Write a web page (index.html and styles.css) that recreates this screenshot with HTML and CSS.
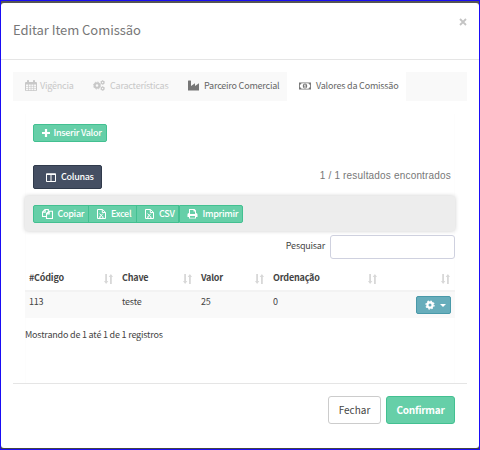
FILE: index.html
```html
<!DOCTYPE html>
<html lang="pt-BR">
<head>
<meta charset="utf-8">
<title>Editar Item Comissão</title>
<link rel="stylesheet" href="styles.css">
</head>
<body>
<svg class="defs" width="0" height="0">
  <symbol id="calendar" viewBox="0 0 12 11"><path fill-rule="evenodd" d="M1 2H2V.8Q2 0 2.8 0H3.2Q4 0 4 .8V2H8V.8Q8 0 8.8 0H9.2Q10 0 10 .8V2H11Q12 2 12 3V10Q12 11 11 11H1Q0 11 0 10V3Q0 2 1 2ZM1 4.4V6H3V4.4ZM3.7 4.4V6H5.7V4.4ZM6.4 4.4V6H8.4V4.4ZM9.1 4.4V6H11V4.4ZM1 6.6V8.2H3V6.6ZM3.7 6.6V8.2H5.7V6.6ZM6.4 6.6V8.2H8.4V6.6ZM9.1 6.6V8.2H11V6.6ZM1 8.8V10.2H3V8.8ZM3.7 8.8V10.2H5.7V8.8ZM6.4 8.8V10.2H8.4V8.8ZM9.1 8.8V10.2H11V8.8Z"/></symbol>
  <symbol id="cogs" viewBox="0 0 12 11"><g fill="none" stroke="currentColor"><circle cx="4" cy="5.5" r="2.3" stroke-width="2"/><circle cx="4" cy="5.5" r="3.5" stroke-width="1" stroke-dasharray="1.4 1.35"/><circle cx="9.6" cy="2.5" r="1.3" stroke-width="1.2"/><circle cx="9.6" cy="2.5" r="2" stroke-width=".7" stroke-dasharray="1 1"/><circle cx="9.6" cy="8.5" r="1.3" stroke-width="1.2"/><circle cx="9.6" cy="8.5" r="2" stroke-width=".7" stroke-dasharray="1 1"/></g></symbol>
  <symbol id="industry" viewBox="0 0 11 11"><path d="M0 1Q0 .5.5.5H2.5Q3 .5 3 1V6L7 3.2V6L11 3.2V10.5H0Z"/></symbol>
  <symbol id="money" viewBox="0 0 12 8"><path fill-rule="evenodd" d="M0 .5H12V7.5H0ZM2.5 1.3Q2.3 2.6.9 2.8V5.2Q2.3 5.4 2.5 6.7H9.5Q9.7 5.4 11.1 5.2V2.8Q9.7 2.6 9.5 1.3Z"/><path fill-rule="evenodd" d="M6 1.5C7.4 1.5 8.2 2.6 8.2 4S7.4 6.5 6 6.5 3.8 5.4 3.8 4 4.6 1.5 6 1.5ZM5 2.9V3.5H5.6V5H5V5.6H7V5H6.5V2.4H5.9Z"/></symbol>
  <symbol id="plus" viewBox="0 0 8 8"><path d="M2.9 0H5.1V2.9H8V5.1H5.1V8H2.9V5.1H0V2.9H2.9Z"/></symbol>
  <symbol id="columns" viewBox="0 0 10 9"><path fill-rule="evenodd" d="M.8 .3H9.2Q10 .3 10 1V8.2Q10 9 9.2 9H.8Q0 9 0 8.2V1Q0 .3 .8 .3ZM1 2V8H4.5V2ZM5.5 2V8H9V2Z"/></symbol>
  <symbol id="copy" viewBox="0 0 11 10"><g fill="none" stroke="currentColor" stroke-width="1.1"><path d="M4.3 7.5H.5V3L3 .5H6.3V2.2M3.2.5V3.2H.5"/><path d="M4.5 4.5L7 2.2H10.5V9.5H4.5ZM7.2 2.5V4.9H4.8"/></g></symbol>
  <symbol id="file" viewBox="0 0 9 10"><path d="M.5.5H5.5L8.5 3.3V9.5H.5ZM5.3.7V3.5H8.3M2.6 4.6L5.8 8.2M5.9 4.6L2.6 8.2M2 8.2H3.7M5 8.2H6.5" fill="none" stroke="currentColor"/></symbol>
  <symbol id="print" viewBox="0 0 10 10"><path fill-rule="evenodd" d="M1.5 0H7L8.5 1.5V4Q10 4 10 5.5V8H8.5V9.6H1.5V8H0V5.5Q0 4 1.5 4ZM2.5 1V5H7.5V2.5H6V1ZM2.5 7V8.7H7.5V7Z"/></symbol>
  <symbol id="cog" viewBox="0 0 10 10"><path d="M5 1.3A3.7 3.7 0 1 0 5 8.7 3.7 3.7 0 1 0 5 1.3ZM5 3.5A1.5 1.5 0 1 1 5 6.5 1.5 1.5 0 1 1 5 3.5Z" fill-rule="evenodd"/><circle cx="5" cy="5" r="4" fill="none" stroke="currentColor" stroke-width="1.3" stroke-dasharray="1.57 1.57"/></symbol>
  <symbol id="sort" viewBox="0 0 9 10"><path d="M1.2 0H3V7H4.3L2.1 10 0 7H1.2ZM6 10H7.8V3H9L6.9 0 4.7 3H6Z"/></symbol>
</svg>
<div class="modal">
  <header class="modal-header">
    <h1><span>Editar Item Comissão</span></h1>
    <svg class="close" viewBox="0 0 8 8"><path d="M1 1L7 7M7 1L1 7"/></svg>
  </header>
  <nav class="tabs">
    <a class="tab vig"><svg><use href="#calendar"/></svg><span>Vigência</span></a>
    <a class="tab car"><svg><use href="#cogs"/></svg><span>Características</span></a>
    <a class="tab par"><svg><use href="#industry"/></svg><span>Parceiro Comercial</span></a>
    <a class="tab val"><svg><use href="#money"/></svg><span>Valores da Comissão</span></a>
  </nav>
  <main class="content">
    <button class="btn green insert"><svg><use href="#plus"/></svg><span>Inserir Valor</span></button>
    <div class="toolbar">
      <button class="btn dark"><svg><use href="#columns"/></svg><span>Colunas</span></button>
      <span class="found">1 / 1 resultados encontrados</span>
    </div>
    <div class="export">
      <button class="btn green copiar"><svg><use href="#copy"/></svg><span>Copiar</span></button>
      <button class="btn green excel"><svg><use href="#file"/></svg><span>Excel</span></button>
      <button class="btn green csv"><svg><use href="#file"/></svg><span>CSV</span></button>
      <button class="btn green imprimir"><svg><use href="#print"/></svg><span>Imprimir</span></button>
    </div>
    <label class="search"><span>Pesquisar</span><input type="text"></label>
    <div class="row head">
      <div><span>#Código</span><svg><use href="#sort"/></svg></div>
      <div><span>Chave</span><svg><use href="#sort"/></svg></div>
      <div><span>Valor</span><svg><use href="#sort"/></svg></div>
      <div><span>Ordenação</span><svg><use href="#sort"/></svg></div>
      <div><svg><use href="#sort"/></svg></div>
    </div>
    <div class="row data">
      <div>113</div><div>teste</div><div>25</div><div>0</div>
      <div class="action"><button class="btn teal"><svg><use href="#cog"/></svg><i class="caret"></i></button></div>
    </div>
    <p class="info"><span>Mostrando de 1 até 1 de 1 registros</span></p>
  </main>
  <footer class="modal-footer">
    <button class="btn white"><span>Fechar</span></button>
    <button class="btn green confirm"><span>Confirmar</span></button>
  </footer>
</div>
</body>
</html>
```
FILE: styles.css
```css
* { box-sizing: border-box; }
body {
  margin: 0;
  height: 450px;
  padding: 3px 0 2px;
  background: linear-gradient(#1a0df5 0 1px, #555 1px 448px, #444 448px 449px, #1a0df5 449px);
  border-left: 1px solid #1a0df5;
  border-right: 1px solid #1a0df5;
  font: 9px/12px "Noto Sans CJK JP", "Noto Sans", sans-serif;
  letter-spacing: -0.2px;
  color: #444;
  overflow: hidden;
}
.defs { display: block; }
svg { fill: currentColor; color: inherit; flex: none; display: block; }
.modal { display: flex; flex-direction: column; height: 445px; background: #fff; border-radius: 3px; }
.modal-header { display: flex; justify-content: space-between; height: 57px; padding: 15px 12px 0; border-bottom: 1px solid #e5e5e5; }
h1 { margin: 2px 0 0; font-size: 13px; line-height: 20px; font-weight: 400; letter-spacing: -0.05px; color: #777; }
.close { width: 8px; height: 8px; stroke: #c4c4c4; stroke-width: 1.8; }
.tabs { display: flex; height: 29px; margin: 12px 12px 0; background: #f9f9f9; color: #666; }
.tab { display: flex; align-items: center; padding-left: 12px; white-space: nowrap; padding-bottom: 2px; }
.tab svg { width: 12px; height: 11px; margin-right: 3px; }
.vig { width: 68px; color: #c8c8c8; }
.car { width: 95px; color: #c8c8c8; }
.tab.car svg { margin-right: 5px; }
.par { width: 111px; letter-spacing: -0.2px; }
.tab.par svg { width: 11px; margin-right: 5px; color: #777; }
.val { width: 119px; background: #fff; }
.tab.val svg { height: 8px; margin-right: 5px; color: #777; }
.content { display: flex; flex-direction: column; margin: 13px 24px 0; height: 269px; border: 1px solid #fdfdfd; border-width: 0 1px; padding-top: 10px; }
.content > * { margin-left: -1px; margin-right: -1px; }
.btn { display: flex; align-items: center; flex: none; padding: 0; height: 18px; border: 1px solid; border-radius: 2px; font: 500 9px/12px "Noto Sans CJK JP", "Noto Sans", sans-serif; letter-spacing: -0.3px; color: #fff; white-space: nowrap; }
.green { background: #66cfa8; border-color: #43c091; }
.content .insert { width: 74px; padding-left: 8px; margin-left: 7px; }
.insert svg { width: 8px; height: 8px; margin-right: 3.5px; }
.toolbar { display: flex; justify-content: space-between; margin-top: 23px; padding: 0 4px 0 8px; }
.dark { width: 69px; height: 24px; padding-left: 12px; background: #454f63; border-color: #303a4b; }
.dark svg { width: 10px; height: 9px; margin-right: 5px; }
.found { font: 10px/12px "Liberation Sans", Arial, sans-serif; letter-spacing: 0.18px; color: #777; margin-top: 5px; }
.export { display: flex; height: 35px; margin-top: 7px; padding: 9px 8px; background: #ededed; border-radius: 3px; box-shadow: 0 0 4px #ccc; }
.export .btn { border-radius: 0; padding-left: 8px; }
.export svg { width: 11px; height: 10px; margin-right: 4.5px; }
.export .copiar { width: 56px; border-radius: 2px 0 0 2px; }
.export .excel { width: 49px; margin-left: -1px; }
.export .csv { width: 43px; margin-left: -1px; }
.export .excel svg, .export .csv svg { width: 9px; margin-right: 5px; }
.export .imprimir { width: 64px; border-radius: 0 2px 2px 0; padding-left: 7px; }
.search { display: flex; justify-content: flex-end; margin-top: 4px; height: 24px; line-height: 21px; }
.search input { width: 125px; height: 24px; margin-left: 5px; border: 1px solid #cfd1df; border-radius: 3px; padding: 0 4px; background: #fff; }
.row { display: grid; grid-template-columns: 93px 79px 72px 113px 73px; }
.row > div { padding-left: 4px; }
.head { height: 33px; border-bottom: 2px solid #f3f3f3; font-weight: 700; padding-top: 13px; }
.head > div { display: flex; justify-content: space-between; padding-right: 5px; }
.head > div:last-child { justify-content: flex-end; }
.head svg { width: 9px; height: 10px; color: #d8d8d8; margin-top: 2px; }
.data { height: 26px; background: #f9f9f9; padding-top: 4px; }
.action { display: flex; justify-content: flex-end; padding-right: 4px; }
.teal { width: 35px; padding-left: 8px; background: #67adbb; border-color: #4999a9; }
.teal svg { width: 10px; height: 10px; }
.caret { margin-left: 5px; border: 3px solid transparent; border-top-color: #fff; border-bottom: 0; }
.content .info { margin: 11px 0 0 -1px; }
.modal-footer { display: flex; justify-content: flex-end; gap: 5px; margin: 0 12px; padding: 12px 12px 0; border-top: 1px solid #e5e5e5; }
.modal-footer .btn { height: 28px; justify-content: center; border-radius: 3px; font-size: 10px; line-height: 14px; }
.modal-footer .white { width: 53px; background: #fff; border-color: #ccc; color: #444; font-weight: 400; letter-spacing: 0; }
.modal-footer .confirm { width: 69px; font-weight: 700; letter-spacing: -0.25px; }
```
